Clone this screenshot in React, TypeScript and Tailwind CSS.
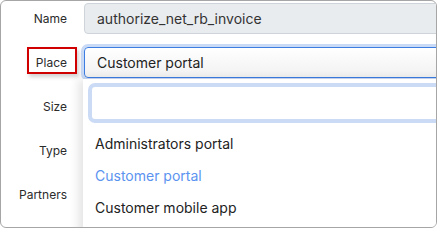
const labels = ["Name", "Place", "Size", "Type", "Partners"];

const options = [
  { label: "Administrators portal", active: false },
  { label: "Customer portal", active: true },
  { label: "Customer mobile app", active: false },
];

function FieldLabel({ text }: { text: string }) {
  return (
    <div className="w-[66px] shrink-0 text-right text-[12px] leading-none text-[#2b2b2b]">
      {text}
    </div>
  );
}

export default function App() {
  return (
    <div
      className="relative h-[228px] w-[437px] overflow-hidden rounded-[6px] border border-[#a6a6a6] bg-white"
      style={{ fontFamily: "Inter, 'Noto Sans', sans-serif" }}
    >
      <div className="flex flex-col gap-[13px] pt-[2px]">
        {labels.map((label) => (
          <div key={label} className="flex h-[31px] items-center gap-[17px]">
            <FieldLabel text={label} />
            {label === "Name" && (
              <div className="flex h-[31px] w-[380px] shrink-0 items-center rounded-[4px] border border-[#ced4da] bg-[#e9ecef] pl-[12px] text-[14px] text-[#333]">
                authorize_net_rb_invoice
              </div>
            )}
            {label === "Place" && (
              <div className="flex h-[31px] w-[380px] shrink-0 items-center rounded-[4px] border border-[#3b7de0] bg-gradient-to-b from-white to-[#f1f1f1] pl-[12px] text-[14px] text-[#222] ring-[3px] ring-[#c9daf6]">
                Customer portal
              </div>
            )}
          </div>
        ))}
      </div>

      {/* annotation box around the Place label */}
      <div className="absolute left-[26px] top-[46px] h-[27px] w-[50px] border-2 border-[#d10000] shadow-[2px_3px_4px_rgba(0,0,0,0.18)]" />

      {/* open select dropdown */}
      <div className="absolute left-[82px] top-[78px] h-[160px] w-[380px] bg-white shadow-[-5px_0_9px_rgba(0,0,0,0.1)]">
        <div className="ml-[5px] mt-[4px] h-[40px] rounded-[7px] border-4 border-[#cbdbf6] bg-white" />
        <ul className="mt-[4px]">
          {options.map((o) => (
            <li
              key={o.label}
              className={
                "flex h-[32px] items-center pl-[12px] text-[14px] " +
                (o.active ? "text-[#5a93f0]" : "text-[#222]")
              }
            >
              {o.label}
            </li>
          ))}
        </ul>
      </div>
    </div>
  );
}
